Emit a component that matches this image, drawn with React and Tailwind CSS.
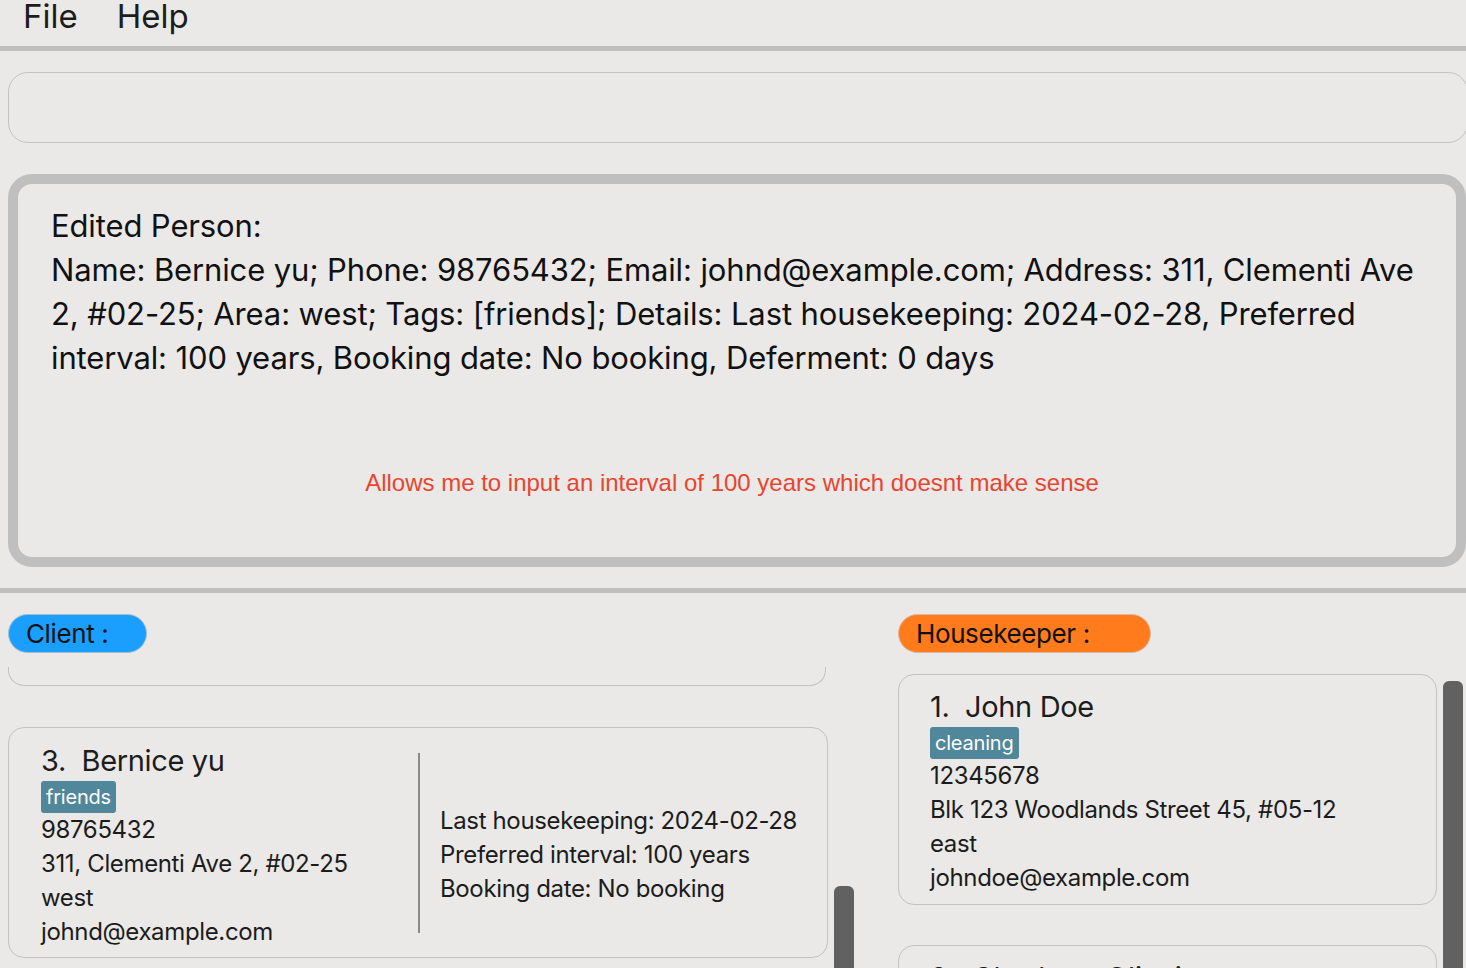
import React from 'react'

const Tag = ({ children }) => (
  <div className="self-start mt-[2px] h-[32px] px-[5px] flex items-center rounded-[3px] bg-[#50879a] text-white text-[20px] tracking-[-0.01em] leading-none">
    {children}
  </div>
)

const Line = ({ children }) => (
  <div className="text-[24px] leading-[34px] tracking-[-0.015em] whitespace-nowrap">{children}</div>
)

const ClientCard = () => (
  <div className="w-[820px] h-[231px] border-[1.5px] border-[#c2c2c2] rounded-[16px] flex pl-[32px] pt-[15px]">
    <div className="w-[377px] flex flex-col">
      <div className="text-[29px] leading-[36px] tracking-[-0.012em] whitespace-nowrap">3.&nbsp; Bernice yu</div>
      <Tag>friends</Tag>
      <Line>98765432</Line>
      <Line>311, Clementi Ave 2, #02-25</Line>
      <Line>west</Line>
      <Line>johnd@example.com</Line>
    </div>
    <div className="w-[2px] bg-[#8a8a8a] mt-[10px] h-[180px]" />
    <div className="pl-[20px] pt-[61px] flex flex-col">
      <Line>Last housekeeping: 2024-02-28</Line>
      <Line>Preferred interval: 100 years</Line>
      <Line>Booking date: No booking</Line>
    </div>
  </div>
)

const HousekeeperCard = () => (
  <div className="w-[539px] h-[231px] border-[1.5px] border-[#c2c2c2] rounded-[16px] flex flex-col pl-[31px] pt-[14px]">
    <div className="text-[29px] leading-[36px] tracking-[-0.012em] whitespace-nowrap">1.&nbsp; John Doe</div>
    <Tag>cleaning</Tag>
    <Line>12345678</Line>
    <Line>Blk 123 Woodlands Street 45, #05-12</Line>
    <Line>east</Line>
    <Line>johndoe@example.com</Line>
  </div>
)

export default function App() {
  return (
    <div className="w-[1466px] h-[968px] overflow-hidden bg-[#eae9e7] text-[#1c1c1c] font-['Inter',sans-serif]">
      {/* menu */}
      <div className="h-[51px] border-b-[5px] border-[#bfbfbf] flex items-start gap-[39px] pl-[23px] text-[33px] leading-[32px]">
        <span>File</span>
        <span>Help</span>
      </div>

      {/* command box */}
      <div className="pt-[21px] pl-2">
        <div className="w-[1460px] h-[71px] border-[1.5px] border-[#c2c2c2] rounded-[20px]" />
      </div>

      {/* result display */}
      <div className="mt-[31px] ml-2 w-[1458px] h-[393px] border-[10px] border-[#bfbfbf] rounded-[24px] pl-[33px] pt-[20px] flex flex-col">
        <div className="text-[31px] leading-[44px] tracking-[-0.004em] whitespace-nowrap text-[#111]">
          Edited Person:
          <br />
          Name: Bernice yu; Phone: 98765432; Email: johnd@example.com; Address: 311, Clementi Ave
          <br />
          2, #02-25; Area: west; Tags: [friends]; Details: Last housekeeping: 2024-02-28, Preferred
          <br />
          interval: 100 years, Booking date: No booking, Deferment: 0 days
        </div>
        <div className="mt-[89px] -ml-[33px] pr-[10px] text-center font-['Liberation_Sans',Arial,sans-serif] text-[24px] leading-[28px] text-[#e8452f]">
          Allows me to input an interval of 100 years which doesnt make sense
        </div>
      </div>

      <div className="mt-[21px] h-[5px] bg-[#bfbfbf]" />

      {/* lists */}
      <div className="flex pt-[21px]">
        <div className="w-[898px] pl-2 flex flex-col">
          <div className="w-[139px] h-[39px] rounded-full bg-[#1a9fff] border-[1.5px] border-[#a9bccb] pl-[17px] flex items-center text-[26px] tracking-[-0.015em] text-[#111]">
            Client :
          </div>
          <div className="flex mt-[14px]">
            <div className="flex flex-col">
              <div className="w-[818px] h-[19px] border-x-[1.5px] border-b-[1.5px] border-[#c2c2c2] rounded-b-[16px] border-t-0" />
              <div className="mt-[41px]">
                <ClientCard />
              </div>
            </div>
            <div className="ml-[6px] mt-[219px] w-[20px] h-[100px] rounded-t-[6px] bg-[#616161]" />
          </div>
        </div>

        <div className="flex flex-col">
          <div className="w-[253px] h-[39px] rounded-full bg-[#ff7b1c] border-[1.5px] border-[#d9b9a2] pl-[17px] flex items-center text-[26px] tracking-[-0.015em] text-[#111]">
            Housekeeper :
          </div>
          <div className="flex mt-[21px]">
            <div className="flex flex-col">
              <HousekeeperCard />
              <div className="mt-[40px] w-[539px] h-[60px] border-[1.5px] border-[#c2c2c2] rounded-[16px] pl-[31px] pt-[14px] text-[29px] leading-[36px] whitespace-nowrap">
                2.&nbsp; Charlotte Oliveiro
              </div>
            </div>
            <div className="ml-[6px] mt-[7px] w-[20px] h-[300px] rounded-t-[6px] bg-[#616161]" />
          </div>
        </div>
      </div>
    </div>
  )
}
